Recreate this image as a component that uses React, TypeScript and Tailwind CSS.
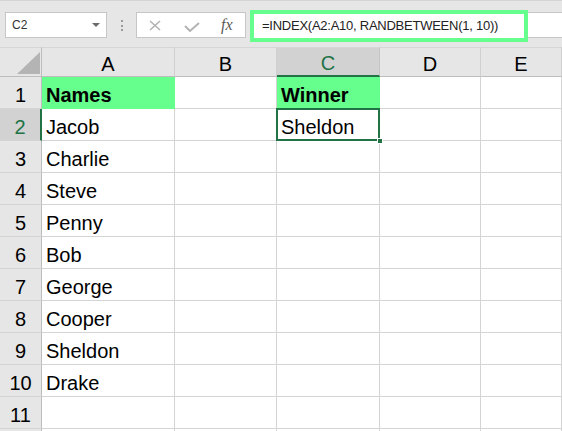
import React from "react";

const FONT = { fontFamily: '"Liberation Sans", Arial, sans-serif' };

const names = ["Jacob", "Charlie", "Steve", "Penny", "Bob", "George", "Cooper", "Sheldon", "Drake"];

type Cell = { text?: string; bold?: boolean; fill?: boolean; selected?: boolean };

function cellAt(row: number, col: number): Cell {
  if (row === 1 && col === 0) return { text: "Names", bold: true, fill: true };
  if (row === 1 && col === 2) return { text: "Winner", bold: true, fill: true };
  if (row === 2 && col === 2) return { text: "Sheldon", selected: true };
  if (col === 0 && row >= 2 && row <= 10) return { text: names[row - 2] };
  return {};
}

function Toolbar() {
  return (
    <div className="flex h-[47px] items-start border-t border-[#d4d4d4] bg-[#e6e6e6] pt-[11px]">
      <div className="ml-[5px] flex h-[26px] w-[102px] items-center justify-between border border-[#c6c6c6] bg-white pl-[6px] pr-[6px]">
        <span className="text-[12px] text-[#333]">C2</span>
        <span className="h-0 w-0 border-x-[4px] border-t-[4px] border-x-transparent border-t-[#6b6b6b]" />
      </div>
      <div className="ml-[14px] mt-[8px] flex flex-col gap-[2.5px]">
        <span className="h-[2px] w-[2px] bg-[#9a9a9a]" />
        <span className="h-[2px] w-[2px] bg-[#9a9a9a]" />
        <span className="h-[2px] w-[2px] bg-[#9a9a9a]" />
      </div>
      <div className="ml-[13px] flex h-[26px] w-[110px] items-center border border-[#c6c6c6] bg-white">
        <svg width="12" height="11" viewBox="0 0 12 11" className="ml-[12px]">
          <path d="M1 1 L11 10 M11 1 L1 10" stroke="#b4b4b4" strokeWidth="1.6" fill="none" />
        </svg>
        <svg width="16" height="10" viewBox="0 0 16 10" className="ml-[23px] mt-[4px]">
          <path d="M1 4 L6 9 L15 1" stroke="#b4b4b4" strokeWidth="2" fill="none" />
        </svg>
        <span
          className="ml-[21px] text-[16px] italic text-[#5a5a5a]"
          style={{ fontFamily: '"Liberation Serif", "Times New Roman", serif' }}
        >
          fx
        </span>
      </div>
      <div className="-mt-[2px] ml-[4px] flex h-[32px] w-[278px] items-center border-[4px] border-[#66fe8c] bg-white pl-[8px]">
        <span className="text-[13px] tracking-[-0.25px] text-[#222]">=INDEX(A2:A10, RANDBETWEEN(1, 10))</span>
      </div>
      <div className="h-[26px] flex-1 border-y border-[#c6c6c6] bg-white" />
    </div>
  );
}

export default function App() {
  const rows = Array.from({ length: 12 }, (_, i) => i + 1);
  const cols = ["A", "B", "C", "D", "E"];
  return (
    <div className="h-[431px] w-[562px] overflow-hidden bg-white" style={FONT}>
      <Toolbar />
      <div className="grid grid-cols-[42px_133px_102px_103px_101px_1fr]">
        {/* header row */}
        <div className="relative h-[30px] border-b border-r border-t border-[#bdbdbd] border-t-[#d6d6d6] bg-[#e6e6e6]">
          <svg width="24" height="23" viewBox="0 0 24 23" className="absolute left-[17px] top-[4px]">
            <path d="M23 0 L23 22 L0 22 Z" fill="#b4b4b4" />
          </svg>
        </div>
        {cols.map((c) =>
          c === "C" ? (
            <div
              key={c}
              className="flex h-[30px] items-center justify-center border-b-2 border-r border-t border-[#217346] border-r-[#c4c4c4] border-t-[#d6d6d6] bg-[#d2d2d2] pt-[3px] text-[20px] text-[#217346]"
            >
              {c}
            </div>
          ) : (
            <div
              key={c}
              className="flex h-[30px] items-center justify-center border-b border-r border-t border-[#d0d0d0] border-b-[#bdbdbd] border-t-[#d6d6d6] bg-[#e6e6e6] pt-[4px] text-[20px] text-black"
            >
              {c}
            </div>
          )
        )}
        {rows.map((r) => (
          <React.Fragment key={r}>
            {r === 2 ? (
              <div className="flex h-[32px] items-center justify-center border-b border-r-2 border-[#d4d4d4] border-r-[#217346] bg-[#d2d2d2] pt-[5px] text-[20px] text-[#217346]">
                {r}
              </div>
            ) : (
              <div className="flex h-[32px] items-center justify-center border-b border-r border-[#d4d4d4] border-r-[#bdbdbd] bg-[#e6e6e6] pt-[5px] text-[20px] text-black">
                {r <= 11 ? r : ""}
              </div>
            )}
            {cols.map((c, ci) => {
              const cell = cellAt(r, ci);
              return (
                <div
                  key={c}
                  className={`relative flex h-[32px] items-center border-b border-r pl-[4px] pt-[5px] text-[20px] text-black ${
                    cell.fill ? "border-[#66fe8c] bg-[#66fe8c]" : "border-[#d4d4d4] bg-white"
                  } ${cell.bold ? "font-bold" : ""}`}
                >
                  {cell.text}
                  {cell.selected && (
                    <>
                      <div className="pointer-events-none absolute -bottom-px -left-px -right-px -top-px border-2 border-[#217346]" />
                      <div className="absolute -bottom-[4px] -right-[4px] z-10 h-[6px] w-[6px] border border-white bg-[#217346]" />
                    </>
                  )}
                </div>
              );
            })}
          </React.Fragment>
        ))}
      </div>
    </div>
  );
}
